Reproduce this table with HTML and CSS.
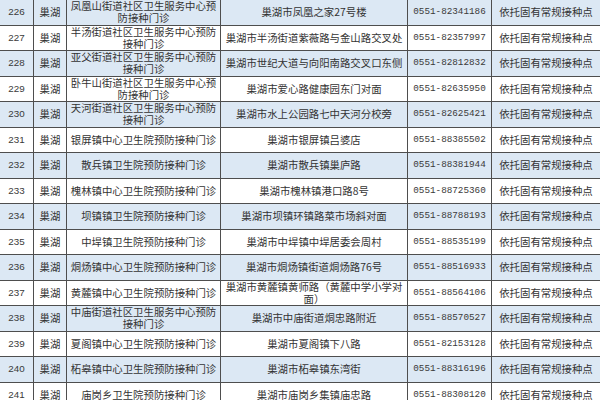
FILE: index.html
```html
<!DOCTYPE html>
<html lang="zh-CN">
<head>
<meta charset="utf-8">
<title>巢湖预防接种门诊</title>
<link rel="stylesheet" href="styles.css">
</head>
<body>
<div class="sheet">
  <div class="row alt"><div class="c no">226</div><div class="c">巢湖</div><div class="c">凤凰山街道社区卫生服务中心预防接种门诊</div><div class="c">巢湖市凤凰之家27号楼</div><div class="c tel">0551-82341186</div><div class="c">依托固有常规接种点</div></div>
  <div class="row"><div class="c no">227</div><div class="c">巢湖</div><div class="c">半汤街道社区卫生服务中心预防接种门诊</div><div class="c">巢湖市半汤街道紫薇路与金山路交叉处</div><div class="c tel">0551-82357997</div><div class="c">依托固有常规接种点</div></div>
  <div class="row alt"><div class="c no">228</div><div class="c">巢湖</div><div class="c">亚父街道社区卫生服务中心预防接种门诊</div><div class="c">巢湖市世纪大道与向阳南路交叉口东侧</div><div class="c tel">0551-82812832</div><div class="c">依托固有常规接种点</div></div>
  <div class="row"><div class="c no">229</div><div class="c">巢湖</div><div class="c">卧牛山街道社区卫生服务中心预防接种门诊</div><div class="c">巢湖市爱心路健康园东门对面</div><div class="c tel">0551-82635950</div><div class="c">依托固有常规接种点</div></div>
  <div class="row alt"><div class="c no">230</div><div class="c">巢湖</div><div class="c">天河街道社区卫生服务中心预防接种门诊</div><div class="c">巢湖市水上公园路七中天河分校旁</div><div class="c tel">0551-82625421</div><div class="c">依托固有常规接种点</div></div>
  <div class="row"><div class="c no">231</div><div class="c">巢湖</div><div class="c">银屏镇中心卫生院预防接种门诊</div><div class="c">巢湖市银屏镇吕婆店</div><div class="c tel">0551-88385502</div><div class="c">依托固有常规接种点</div></div>
  <div class="row alt"><div class="c no">232</div><div class="c">巢湖</div><div class="c">散兵镇卫生院预防接种门诊</div><div class="c">巢湖市散兵镇巢庐路</div><div class="c tel">0551-88381944</div><div class="c">依托固有常规接种点</div></div>
  <div class="row"><div class="c no">233</div><div class="c">巢湖</div><div class="c">槐林镇中心卫生院预防接种门诊</div><div class="c">巢湖市槐林镇港口路8号</div><div class="c tel">0551-88725360</div><div class="c">依托固有常规接种点</div></div>
  <div class="row alt"><div class="c no">234</div><div class="c">巢湖</div><div class="c">坝镇镇卫生院预防接种门诊</div><div class="c">巢湖市坝镇环镇路菜市场斜对面</div><div class="c tel">0551-88788193</div><div class="c">依托固有常规接种点</div></div>
  <div class="row"><div class="c no">235</div><div class="c">巢湖</div><div class="c">中垾镇卫生院预防接种门诊</div><div class="c">巢湖市中垾镇中垾居委会周村</div><div class="c tel">0551-88535199</div><div class="c">依托固有常规接种点</div></div>
  <div class="row alt"><div class="c no">236</div><div class="c">巢湖</div><div class="c">烔炀镇中心卫生院预防接种门诊</div><div class="c">巢湖市烔炀镇街道烔炀路76号</div><div class="c tel">0551-88516933</div><div class="c">依托固有常规接种点</div></div>
  <div class="row"><div class="c no">237</div><div class="c">巢湖</div><div class="c">黄麓镇中心卫生院预防接种门诊</div><div class="c">巢湖市黄麓镇黄师路（黄麓中学小学对面）</div><div class="c tel">0551-88564106</div><div class="c">依托固有常规接种点</div></div>
  <div class="row alt"><div class="c no">238</div><div class="c">巢湖</div><div class="c">中庙街道社区卫生服务中心预防接种门诊</div><div class="c">巢湖市中庙街道烔忠路附近</div><div class="c tel">0551-88570527</div><div class="c">依托固有常规接种点</div></div>
  <div class="row"><div class="c no">239</div><div class="c">巢湖</div><div class="c">夏阁镇中心卫生院预防接种门诊</div><div class="c">巢湖市夏阁镇下八路</div><div class="c tel">0551-82153128</div><div class="c">依托固有常规接种点</div></div>
  <div class="row alt"><div class="c no">240</div><div class="c">巢湖</div><div class="c">柘皋镇中心卫生院预防接种门诊</div><div class="c">巢湖市柘皋镇东湾街</div><div class="c tel">0551-88316196</div><div class="c">依托固有常规接种点</div></div>
  <div class="row"><div class="c no">241</div><div class="c">巢湖</div><div class="c">庙岗乡卫生院预防接种门诊</div><div class="c">巢湖市庙岗乡集镇庙忠路</div><div class="c tel">0551-88308120</div><div class="c">依托固有常规接种点</div></div>
</div>
</body>
</html>
```
FILE: styles.css
```css
html, body {
  margin: 0;
  padding: 0;
  background: #ffffff;
  overflow: hidden;
}

.sheet {
  display: grid;
  grid-template-columns: 33px 32px 153px 186px 83px 108px;
  grid-auto-rows: 24.5px;
  gap: 1px;
  padding: 1px;
  margin: -1px 0 0 -1px;
  width: max-content;
  background: #4e4e4e;
  font-family: "Noto Sans CJK SC", "Noto Sans", sans-serif;
  font-size: 10.4px;
  line-height: 12px;
  color: #333333;
}

.row {
  display: contents;
}

.c {
  display: flex;
  align-items: center;
  justify-content: center;
  text-align: center;
  padding: 0 3px;
  background: #ffffff;
}

.row.alt .c {
  background: #dce8f4;
}

.no {
  font-family: "Liberation Sans", sans-serif;
  font-size: 9.8px;
  color: #3a3a3a;
}

.tel {
  font-family: "Liberation Mono", monospace;
  font-size: 9.3px;
  color: #3a3a3a;
  padding: 0;
}
```
